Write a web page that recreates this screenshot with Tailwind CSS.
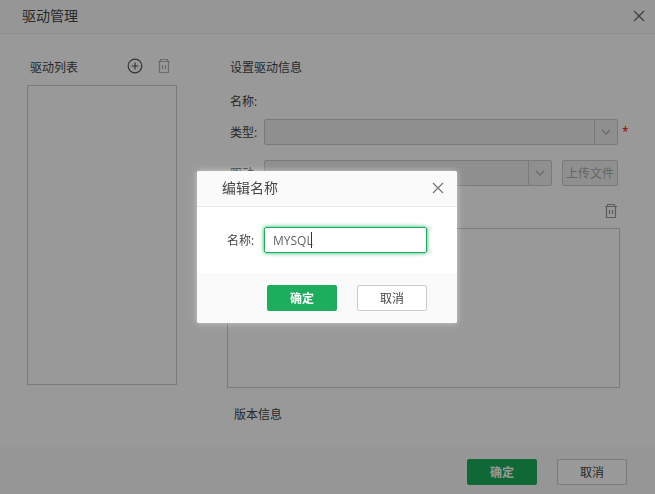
<!DOCTYPE html>
<html lang="zh-CN">

<head>
  <meta charset="UTF-8">
  <meta name="viewport" content="width=device-width, initial-scale=1.0">
  <title>驱动管理</title>
  <script src="https://cdn.jsdelivr.net/npm/@tailwindcss/browser@4"></script>
</head>

<body class="bg-white text-xs text-[#444] font-['Open_Sans','Noto_Sans_CJK_SC',sans-serif]">

  <!-- Driver management -->
  <div class="min-h-screen flex flex-col">
    <header class="h-[34px] flex items-center justify-between pl-[22px] pr-[10px] pb-[2px] bg-[#fafafa] border-b border-[#e8eaed]">
      <h1 class="text-sm leading-5">驱动管理</h1>
      <button type="button" aria-label="关闭">
        <svg class="w-3 h-3" viewBox="0 0 12 12" fill="none" stroke="#666" stroke-width="1.2">
          <path d="M1 1l10 10M11 1L1 11" />
        </svg>
      </button>
    </header>

    <main class="flex-1 flex gap-[50px] pl-[27px] pr-7 pt-5">
      <!-- Driver list -->
      <section class="w-[150px]">
        <div class="h-[26px] flex items-center pl-[3px] pr-[5px]">
          <h2 class="flex-1 leading-4 pt-[2px]">驱动列表</h2>
          <button type="button" aria-label="添加" class="mr-[13px] mb-[2px]">
            <svg class="w-4 h-4" viewBox="0 0 16 16" fill="none" stroke="#555" stroke-width="1.2">
              <circle cx="8" cy="8" r="6.8" />
              <path d="M8 4.5v7M4.5 8h7" />
            </svg>
          </button>
          <button type="button" aria-label="删除" disabled class="mb-[2px]">
            <svg class="w-4 h-4" viewBox="0 0 16 16" fill="none" stroke="#b4b4b4" stroke-width="1.2">
              <path d="M2 3.5h12M4.5 3.5v-2h7v2M3.5 3.5v11h9v-11M6.5 7v4M9.5 7v4" />
            </svg>
          </button>
        </div>
        <div class="mt-[5px] h-[300px] border border-[#ccc]"></div>
      </section>

      <!-- Driver settings -->
      <section class="flex-1">
        <h2 class="h-[26px] leading-[28px] pl-[3px]">设置驱动信息</h2>
        <div class="h-[26px] leading-[28px] pl-[3px] mt-2">名称:</div>

        <div class="flex items-center pl-[3px] mt-[5px]">
          <label for="type" class="w-[34px] leading-4 pt-[2px]">类型:</label>
          <div class="flex-1 h-[26px] flex relative">
            <select id="type" disabled class="w-full appearance-none bg-[#eee] border border-[#ccc] rounded-xs px-2"></select>
            <span class="absolute right-0 inset-y-0 w-6 pr-[2px] border-l border-[#ccc] flex items-center justify-center pointer-events-none">
              <svg class="w-[10px] h-[10px]" viewBox="0 0 10 10" fill="none" stroke="#b4b4b4" stroke-width="1.5">
                <path d="M1 3l4 4 4-4" />
              </svg>
            </span>
          </div>
          <span class="w-[9px] pl-1 text-[#f00]">*</span>
        </div>

        <div class="flex items-center pl-[3px] pr-[9px] mt-[15px]">
          <label for="driver" class="w-[34px] leading-4 pt-[2px]">驱动:</label>
          <div class="flex-1 h-[26px] flex relative">
            <select id="driver" disabled class="w-full appearance-none bg-[#eee] border border-[#ccc] rounded-xs px-2"></select>
            <span class="absolute right-0 inset-y-0 w-6 pr-[2px] border-l border-[#ccc] flex items-center justify-center pointer-events-none">
              <svg class="w-[10px] h-[10px]" viewBox="0 0 10 10" fill="none" stroke="#b4b4b4" stroke-width="1.5">
                <path d="M1 3l4 4 4-4" />
              </svg>
            </span>
          </div>
          <button type="button" disabled class="ml-[10px] w-14 h-[26px] pt-[2px] bg-[#eee] border border-[#ccc] rounded-xs text-[#aaa]">上传文件</button>
        </div>

        <div class="h-[26px] flex items-center justify-end pr-2 mt-3">
          <button type="button" aria-label="删除文件">
            <svg class="w-4 h-4" viewBox="0 0 16 16" fill="none" stroke="#999" stroke-width="1.2">
              <path d="M2 3.5h12M4.5 3.5v-2h7v2M3.5 3.5v11h9v-11M6.5 7v4M9.5 7v4" />
            </svg>
          </button>
        </div>
        <div class="mt-1 mr-[7px] h-40 border border-[#ccc]"></div>
        <h3 class="h-[26px] leading-[28px] pl-[7px] mt-[13px]">版本信息</h3>
      </section>
    </main>

    <footer class="bg-[#fafafa] flex justify-end gap-5 pt-3 pb-[9px] pr-7">
      <button type="button" class="w-[70px] h-[26px] pt-[2px] rounded-xs bg-[#1dae5d] text-white font-bold">确定</button>
      <button type="button" class="w-[70px] h-[26px] pt-[2px] rounded-xs bg-white border border-[#ccc]">取消</button>
    </footer>
  </div>

  <!-- Rename dialog -->
  <div class="fixed inset-0 bg-black/40 flex items-center justify-center pr-px">
    <form role="dialog" aria-labelledby="rename-title" class="w-[260px] bg-white rounded-xs shadow-[0_0_6px_rgba(255,255,255,0.5)]">
      <div class="h-9 flex items-center justify-between pl-[25px] pr-[13px] pb-[2px] bg-[#fafafa] border-b border-[#e8eaed] rounded-t-xs">
        <h2 id="rename-title" class="text-sm leading-5">编辑名称</h2>
        <button type="button" aria-label="关闭">
          <svg class="w-3 h-3" viewBox="0 0 12 12" fill="none" stroke="#777" stroke-width="1.2">
            <path d="M1 1l10 10M11 1L1 11" />
          </svg>
        </button>
      </div>
      <div class="flex items-center px-[30px] py-5">
        <label for="name" class="w-[37px] leading-4 pt-[2px]">名称:</label>
        <div class="flex-1 flex relative">
          <input id="name" type="text" value="MYSQL"
            class="w-full min-w-0 h-[26px] px-2 border border-[#1dae5d] rounded-xs outline-none text-[#666] shadow-[0_0_4px_#1dae5d]">
          <span class="absolute left-[47px] top-[5px] w-px h-4 bg-[#333]"></span>
        </div>
      </div>
      <div class="flex justify-end gap-5 px-[30px] py-3 bg-[#fafafa] rounded-b-xs">
        <button type="button" class="w-[70px] h-[26px] pt-[2px] rounded-xs bg-[#1dae5d] text-white font-bold">确定</button>
        <button type="button" class="w-[70px] h-[26px] pt-[2px] rounded-xs bg-white border border-[#ccc]">取消</button>
      </div>
    </form>
  </div>

</body>

</html>
